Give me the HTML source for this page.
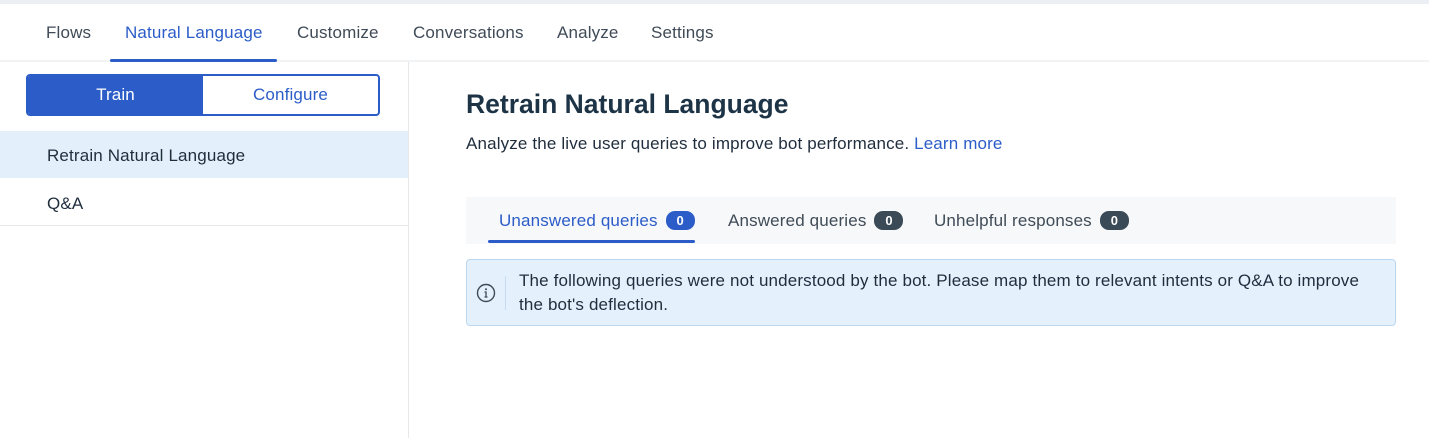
<!DOCTYPE html>
<html><head><meta charset="utf-8"><style>
*{box-sizing:border-box;margin:0;padding:0}
body{width:1429px;height:438px;overflow:hidden;background:#fff;font-family:"Liberation Sans",sans-serif;color:#1f2d3d;position:relative;letter-spacing:0.15px}
.topbar{position:absolute;top:0;left:0;width:1429px;height:4px;background:#eceff4}
.nav{position:absolute;top:4px;left:0;width:1429px;height:58px;border-bottom:2px solid #f1f3f5}
.nav span{position:absolute;top:19px;font-size:17px;color:#3f4b57}
.nav .act{color:#2b5cc8}
.navline{position:absolute;left:110px;top:59px;width:167px;height:3px;background:#2b5cc8;border-radius:2px}
.side{position:absolute;top:62px;left:0;width:409px;height:376px;border-right:1px solid #e5e8eb}
.toggle{position:absolute;left:26px;top:12px;width:354px;height:42px;border:2px solid #2b5cc8;border-radius:4px;display:flex;overflow:hidden}
.toggle div{flex:1;text-align:center;line-height:38px;font-size:17px}
.toggle .t{background:#2b5cc8;color:#fff;flex:0 0 175px}
.toggle .c{color:#2b5cc8}
.item{position:absolute;left:0;width:408px;height:47px;font-size:17px;line-height:49px;padding-left:47px;color:#1f2d3d}
h1{position:absolute;left:466px;top:89px;font-size:26.5px;font-weight:bold;color:#1d3346;letter-spacing:0}
.sub{position:absolute;left:466px;top:134px;font-size:17px;color:#1f2d3d}
.sub a{color:#2b5cc8;text-decoration:none}
.tabs{position:absolute;left:466px;top:197px;width:930px;height:47px;background:#f7f8f9}
.tab{position:absolute;top:14px;font-size:17px;color:#3f4b57;white-space:nowrap}
.badge{display:inline-block;margin-left:8px;background:#3a4a56;color:#fff;font-size:13px;font-weight:bold;border-radius:9px;width:29px;height:19px;line-height:19px;text-align:center;vertical-align:1px;letter-spacing:0}
.info{position:absolute;left:466px;top:259px;width:930px;height:67px;background:#e4f1fc;border:1px solid #bcd8f0;border-radius:4px}
.info .txt{position:absolute;left:52px;top:9px;font-size:17px;line-height:24px;color:#1f2d3d;width:845px}
.info .sep{position:absolute;left:38px;top:16px;height:34px;border-left:1px solid #c6dbee}
</style></head><body>
<div class="topbar"></div>
<div class="nav">
<span style="left:46px">Flows</span>
<span class="act" style="left:125px">Natural Language</span>
<span style="left:297px">Customize</span>
<span style="left:413px">Conversations</span>
<span style="left:557px">Analyze</span>
<span style="left:651px">Settings</span>
</div>
<div class="navline"></div>
<div class="side">
<div class="toggle"><div class="t">Train</div><div class="c">Configure</div></div>
<div class="item" style="top:69px;background:#e3f0fb">Retrain Natural Language</div>
<div class="item" style="top:117px;border-bottom:1px solid #e5e8eb">Q&amp;A</div>
</div>
<h1>Retrain Natural Language</h1>
<div class="sub">Analyze the live user queries to improve bot performance. <a>Learn more</a></div>
<div class="tabs">
<div class="tab" style="left:33px;color:#2b5cc8">Unanswered queries<span class="badge" style="background:#2b5cc8">0</span></div>
<div style="position:absolute;left:22px;top:43px;width:207px;height:3px;background:#2b5cc8;border-radius:2px"></div>
<div class="tab" style="left:262px">Answered queries<span class="badge">0</span></div>
<div class="tab" style="left:468px">Unhelpful responses<span class="badge">0</span></div>
</div>
<div class="info">
<svg style="position:absolute;left:9px;top:23px" width="20" height="20" viewBox="0 0 20 20"><circle cx="10" cy="10" r="8.5" fill="none" stroke="#3f4b57" stroke-width="1.4"/><circle cx="10" cy="6.2" r="1" fill="#3f4b57"/><path d="M8.5 9h1.5v5M8.5 14h3" stroke="#3f4b57" stroke-width="1.3" fill="none"/></svg>
<div class="sep"></div>
<div class="txt">The following queries were not understood by the bot. Please map them to relevant intents or Q&amp;A to improve the bot's deflection.</div>
</div>
</body></html>
